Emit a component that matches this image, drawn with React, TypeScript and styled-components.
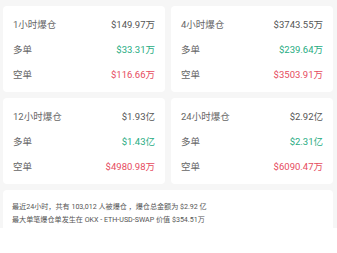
import React from 'react';
import styled, { createGlobalStyle } from 'styled-components';

const GlobalStyle = createGlobalStyle`
  body {
    margin: 0;
    background: #ffffff;
    font-family: Roboto, "Noto Sans CJK SC", sans-serif;
  }
`;

const Page = styled.div`
  background: #f6f6f6;
  padding: 6px 4px 0 3px;
  display: flex;
  flex-direction: column;
  gap: 6px;
`;

const Grid = styled.div`
  display: grid;
  grid-template-columns: 1fr 1fr;
  gap: 6px;
`;

const Card = styled.div`
  background: #ffffff;
  border-radius: 4px;
  padding: 6px 10px;
`;

const Row = styled.div`
  height: 24px;
  display: flex;
  align-items: center;
  justify-content: space-between;
  font-size: 9.5px;

  & + & {
    margin-top: 1px;
  }
`;

const Label = styled.span`
  color: #666666;
`;

const Value = styled.span<{ $tone?: 'up' | 'down' }>`
  color: ${({ $tone }) =>
    $tone === 'up' ? '#27ac82' : $tone === 'down' ? '#e64b5e' : '#555555'};
`;

const Summary = styled.div`
  background: #ffffff;
  border-radius: 4px 4px 0 0;
  padding: 10px 9px 2px;
  font-size: 7.1px;
  line-height: 13px;
  color: #555555;
`;

type Stat = {
  title: string;
  total: string;
  long: string;
  short: string;
};

const stats: Stat[] = [
  { title: '1小时爆仓', total: '$149.97万', long: '$33.31万', short: '$116.66万' },
  { title: '4小时爆仓', total: '$3743.55万', long: '$239.64万', short: '$3503.91万' },
  { title: '12小时爆仓', total: '$1.93亿', long: '$1.43亿', short: '$4980.98万' },
  { title: '24小时爆仓', total: '$2.92亿', long: '$2.31亿', short: '$6090.47万' },
];

export default function App() {
  return (
    <>
      <GlobalStyle />
      <Page>
        <Grid>
          {stats.map((s) => (
            <Card key={s.title}>
              <Row>
                <Label>{s.title}</Label>
                <Value>{s.total}</Value>
              </Row>
              <Row>
                <Label>多单</Label>
                <Value $tone="up">{s.long}</Value>
              </Row>
              <Row>
                <Label>空单</Label>
                <Value $tone="down">{s.short}</Value>
              </Row>
            </Card>
          ))}
        </Grid>
        <Summary>
          <div>最近24小时，共有 103,012 人被爆仓 ，爆仓总金额为 $2.92 亿</div>
          <div>最大单笔爆仓单发生在 OKX - ETH-USD-SWAP 价值 $354.51万</div>
        </Summary>
      </Page>
    </>
  );
}
